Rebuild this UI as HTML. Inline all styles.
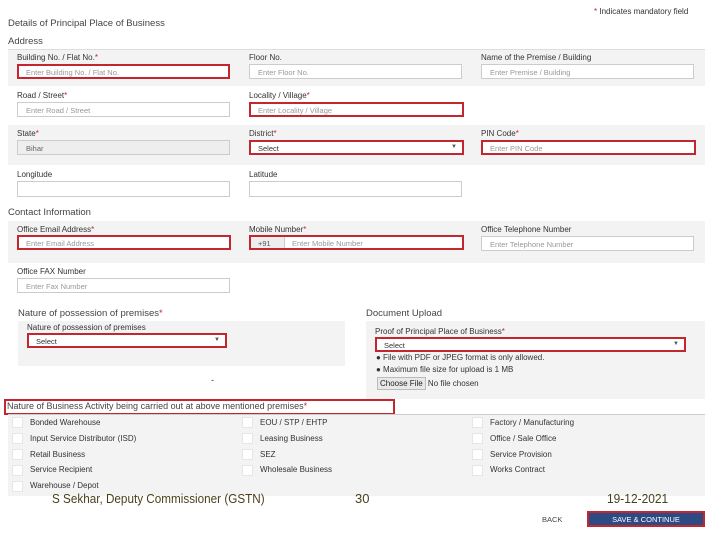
<!DOCTYPE html>
<html><head><meta charset="utf-8"><style>
*{margin:0;padding:0;box-sizing:border-box}
body{width:720px;height:540px;background:#fff;font-family:"Liberation Sans",sans-serif;color:#333;position:relative;overflow:hidden}
.a{position:absolute;white-space:nowrap}
.t{font-size:8px;color:#333}
.h{font-size:9.5px;color:#444}
.in{position:absolute;height:15px;border:1px solid #ccc;background:#fff;font-size:7.5px;color:#999;padding:3px 0 0 8px}
.r{border:2px solid #c3262f;padding:2px 0 0 7px}
.g{position:absolute;background:#f3f3f3}
.s{color:#c3262f}
.cb{position:absolute;width:11px;height:11px;background:#fff;border:1px solid #e6e6e6}
.ar{position:absolute;right:5px;top:2px;font-size:6px;color:#555}
</style></head><body>
<div class="a h" style="left:8px;top:18px">Details of Principal Place of Business</div>
<div class="a t" style="left:594px;top:7px"><span class="s">*</span> Indicates mandatory field</div>
<div class="a h" style="left:8px;top:36px">Address</div>
<div class="g" style="left:8px;top:49px;width:697px;height:37px;border-top:1px solid #ddd"></div>
<div class="g" style="left:8px;top:125px;width:697px;height:40px"></div>
<div class="a t" style="left:17px;top:53px">Building No. / Flat No.<span class="s">*</span></div>
<div class="in r" style="left:17px;top:64px;width:213px">Enter Building No. / Flat No.</div>
<div class="a t" style="left:249px;top:53px">Floor No.</div>
<div class="in" style="left:249px;top:64px;width:213px">Enter Floor No.</div>
<div class="a t" style="left:481px;top:53px">Name of the Premise / Building</div>
<div class="in" style="left:481px;top:64px;width:213px">Enter Premise / Building</div>
<div class="a t" style="left:17px;top:91px">Road / Street<span class="s">*</span></div>
<div class="in" style="left:17px;top:102px;width:213px">Enter Road / Street</div>
<div class="a t" style="left:249px;top:91px">Locality / Village<span class="s">*</span></div>
<div class="in r" style="left:249px;top:102px;width:215px">Enter Locality / Village</div>
<div class="a t" style="left:17px;top:129px">State<span class="s">*</span></div>
<div class="in" style="left:17px;top:140px;width:213px;background:#eee;color:#666">Bihar</div>
<div class="a t" style="left:249px;top:129px">District<span class="s">*</span></div>
<div class="in r" style="left:249px;top:140px;width:215px;color:#333">Select<span class="ar">▼</span></div>
<div class="a t" style="left:481px;top:129px">PIN Code<span class="s">*</span></div>
<div class="in r" style="left:481px;top:140px;width:215px">Enter PIN Code</div>
<div class="a t" style="left:17px;top:170px">Longitude</div>
<div class="in" style="left:17px;top:181px;width:213px;height:16px"></div>
<div class="a t" style="left:249px;top:170px">Latitude</div>
<div class="in" style="left:249px;top:181px;width:213px;height:16px"></div>
<div class="a h" style="left:8px;top:207px">Contact Information</div>
<div class="g" style="left:8px;top:221px;width:697px;height:42px"></div>
<div class="a t" style="left:17px;top:225px">Office Email Address<span class="s">*</span></div>
<div class="in r" style="left:17px;top:235px;width:214px">Enter Email Address</div>
<div class="a t" style="left:249px;top:225px">Mobile Number<span class="s">*</span></div>
<div class="in r" style="left:249px;top:235px;width:215px;padding:0;display:flex"><span style="width:34px;height:11px;background:#eee;border-right:1px solid #ccc;color:#555;padding:2px 0 0 7px">+91</span><span style="padding:2px 0 0 7px">Enter Mobile Number</span></div>
<div class="a t" style="left:481px;top:225px">Office Telephone Number</div>
<div class="in" style="left:481px;top:236px;width:213px">Enter Telephone Number</div>
<div class="a t" style="left:17px;top:267px">Office FAX Number</div>
<div class="in" style="left:17px;top:278px;width:213px">Enter Fax Number</div>
<div class="a h" style="left:18px;top:308px">Nature of possession of premises<span class="s">*</span></div>
<div class="g" style="left:18px;top:321px;width:327px;height:45px"></div>
<div class="a t" style="left:27px;top:323px">Nature of possession of premises</div>
<div class="in r" style="left:27px;top:333px;width:200px;color:#333">Select<span class="ar">▼</span></div>
<div class="a" style="left:211px;top:375px;font-size:9px">-</div>
<div class="a h" style="left:366px;top:308px">Document Upload</div>
<div class="g" style="left:366px;top:321px;width:339px;height:78px"></div>
<div class="a t" style="left:375px;top:327px">Proof of Principal Place of Business<span class="s">*</span></div>
<div class="in r" style="left:375px;top:337px;width:311px;color:#333">Select<span class="ar">▼</span></div>
<div class="a t" style="left:376px;top:353px">● File with PDF or JPEG format is only allowed.</div>
<div class="a t" style="left:376px;top:365px">● Maximum file size for upload is 1 MB</div>
<div class="a t" style="left:377px;top:377px"><span style="display:inline-block;background:#e8e8e8;border:1px solid #bbb;padding:1px 2px;color:#222">Choose File</span> No file chosen</div>
<div class="a" style="left:4px;top:399px;width:391px;height:16px;border:2px solid #c3262f"></div>
<div class="a h" style="left:7px;top:401px;font-size:9px">Nature of Business Activity being carried out at above mentioned premises<span class="s">*</span></div>
<div class="g" style="left:8px;top:414px;width:697px;height:82px;border-top:1px solid #ccc"></div>
<div class="cb" style="left:12px;top:417px"></div><div class="a t" style="left:30px;top:418px">Bonded Warehouse</div>
<div class="cb" style="left:242px;top:417px"></div><div class="a t" style="left:260px;top:418px">EOU / STP / EHTP</div>
<div class="cb" style="left:472px;top:417px"></div><div class="a t" style="left:490px;top:418px">Factory / Manufacturing</div>
<div class="cb" style="left:12px;top:433px"></div><div class="a t" style="left:30px;top:434px">Input Service Distributor (ISD)</div>
<div class="cb" style="left:242px;top:433px"></div><div class="a t" style="left:260px;top:434px">Leasing Business</div>
<div class="cb" style="left:472px;top:433px"></div><div class="a t" style="left:490px;top:434px">Office / Sale Office</div>
<div class="cb" style="left:12px;top:449px"></div><div class="a t" style="left:30px;top:450px">Retail Business</div>
<div class="cb" style="left:242px;top:449px"></div><div class="a t" style="left:260px;top:450px">SEZ</div>
<div class="cb" style="left:472px;top:449px"></div><div class="a t" style="left:490px;top:450px">Service Provision</div>
<div class="cb" style="left:12px;top:465px"></div><div class="a t" style="left:30px;top:465px">Service Recipient</div>
<div class="cb" style="left:242px;top:465px"></div><div class="a t" style="left:260px;top:465px">Wholesale Business</div>
<div class="cb" style="left:472px;top:465px"></div><div class="a t" style="left:490px;top:465px">Works Contract</div>
<div class="cb" style="left:12px;top:481px"></div><div class="a t" style="left:30px;top:481px">Warehouse / Depot</div>
<div class="a" style="left:52px;top:491px;font-size:13px;color:#4a3f1a;transform:scaleX(.9);transform-origin:left">S Sekhar, Deputy Commissioner (GSTN)</div>
<div class="a" style="left:355px;top:491px;font-size:13px;color:#4a3f1a">30</div>
<div class="a" style="left:607px;top:491px;font-size:13px;color:#4a3f1a;transform:scaleX(.92);transform-origin:left">19-12-2021</div>
<div class="a" style="left:542px;top:515px;font-size:7.5px;color:#444">BACK</div>
<div class="a" style="left:587px;top:511px;width:118px;height:16px;border:2px solid #c3262f;background:#2c4b84;color:#fff;font-size:7.5px;text-align:center;padding-top:2px">SAVE &amp; CONTINUE</div>
</body></html>
